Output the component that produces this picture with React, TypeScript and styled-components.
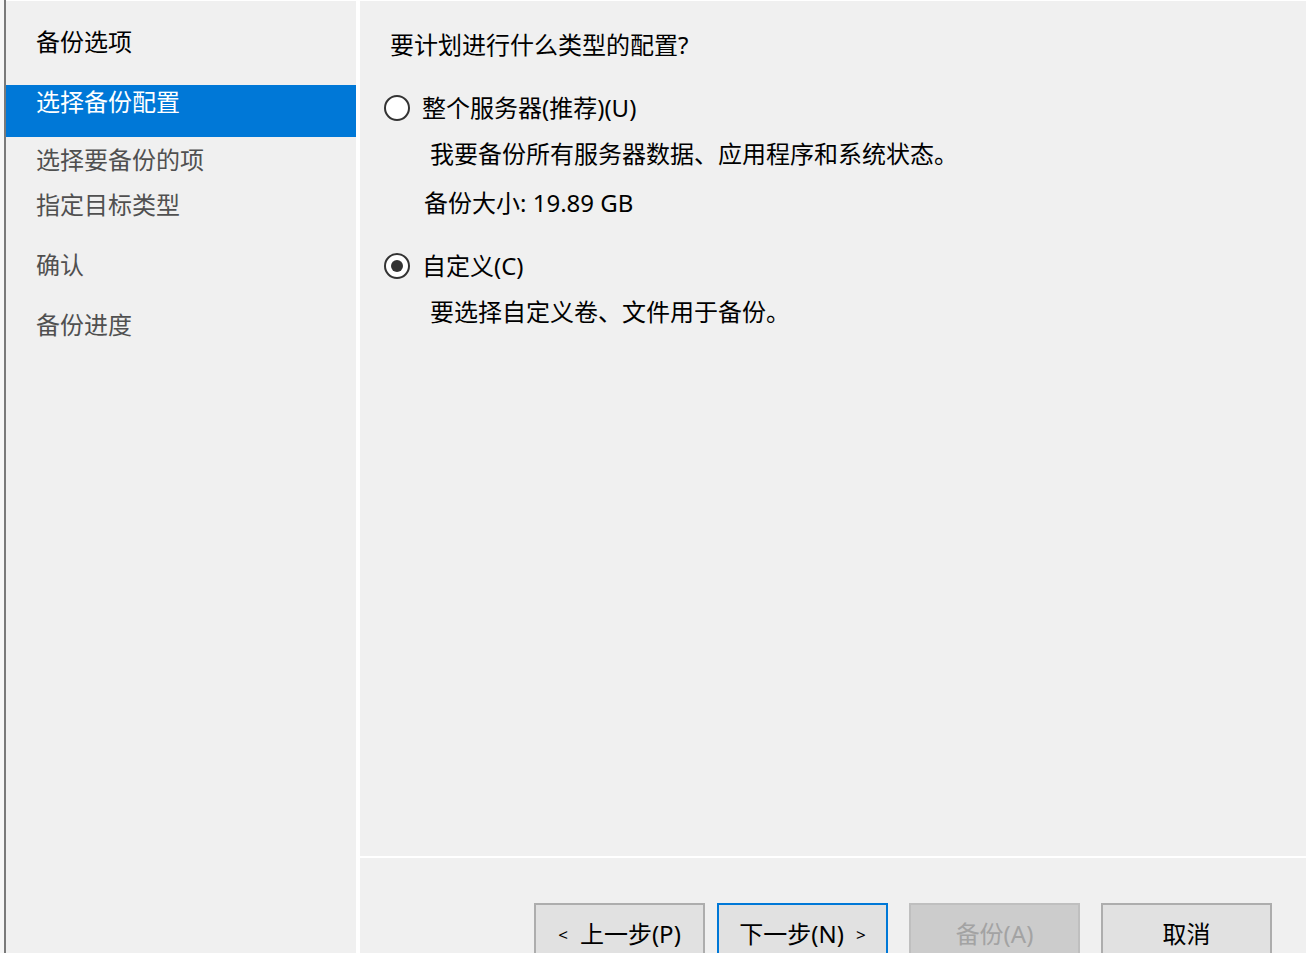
import React from 'react'
import styled, {createGlobalStyle} from 'styled-components'

const GlobalStyle = createGlobalStyle`
  html, body {
    margin: 0;
    padding: 0;
    width: 1306px;
    height: 953px;
    overflow: hidden;
    background: #ffffff;
  }
  body {
    font-family: "Noto Sans", "Noto Sans CJK SC", sans-serif;
    font-size: 24px;
  }
`

const Window = styled.div`
  display: flex;
  height: 953px;
  background: #ffffff;
  padding-top: 1px;
  box-sizing: border-box;
`

const Edge = styled.div`
  width: 4px;
  flex-shrink: 0;
  background: #f7f7f7;
  border-right: 2px solid #7a7a7a;
  margin-top: -1px;
`

const Nav = styled.nav`
  width: 350px;
  flex-shrink: 0;
  background: #f0f0f0;
  margin-right: 4px;
`

const NavItem = styled.div<{$h: number; $pt: number; $tone: 'head' | 'active' | 'idle'}>`
  height: ${({$h}) => $h}px;
  padding: ${({$pt}) => $pt}px 0 0 30px;
  box-sizing: border-box;
  line-height: 30px;
  white-space: nowrap;
  background: ${({$tone}) => ($tone === 'active' ? '#0078d7' : 'transparent')};
  color: ${({$tone}) =>
    $tone === 'active' ? '#ffffff' : $tone === 'head' ? '#000000' : '#505050'};
`

const Main = styled.main`
  flex: 1;
  display: flex;
  flex-direction: column;
  background: #f0f0f0;
`

const Content = styled.section`
  flex: 1;
  padding-top: 29px;
  color: #000000;
  line-height: 30px;
  white-space: nowrap;
`

const Line = styled.div<{$mt: number; $pl: number}>`
  margin-top: ${({$mt}) => $mt}px;
  padding-left: ${({$pl}) => $pl}px;
`

const RadioRow = styled.label<{$mt: number}>`
  display: flex;
  align-items: center;
  gap: 12px;
  margin-top: ${({$mt}) => $mt}px;
  padding-left: 24px;
`

const RadioCircle = styled.span<{$checked?: boolean}>`
  width: 26px;
  height: 26px;
  box-sizing: border-box;
  border: 2px solid #333333;
  border-radius: 50%;
  background: #ffffff;
  display: flex;
  align-items: center;
  justify-content: center;

  &::after {
    content: '';
    width: 12px;
    height: 12px;
    border-radius: 50%;
    background: ${({$checked}) => ($checked ? '#333333' : 'transparent')};
  }
`

const Footer = styled.footer`
  height: 97px;
  flex-shrink: 0;
  border-top: 2px solid #ffffff;
  display: flex;
  justify-content: flex-end;
  align-items: flex-start;
  padding: 45px 34px 0 0;
  box-sizing: border-box;
  overflow: hidden;
`

const Button = styled.button<{$kind?: 'default' | 'disabled'; $ml: number}>`
  width: 171px;
  height: 56px;
  flex-shrink: 0;
  margin-left: ${({$ml}) => $ml}px;
  padding: 14px 0 0;
  box-sizing: border-box;
  font: inherit;
  line-height: 30px;
  display: flex;
  justify-content: center;
  align-items: flex-start;
  gap: 12px;
  border: 2px solid
    ${({$kind}) =>
      $kind === 'default' ? '#0078d7' : $kind === 'disabled' ? '#bfbfbf' : '#adadad'};
  background: ${({$kind}) => ($kind === 'disabled' ? '#cccccc' : '#e1e1e1')};
  color: ${({$kind}) => ($kind === 'disabled' ? '#a3a3a3' : '#000000')};
`

const Chevron = styled.span`
  font-size: 17px;
  line-height: 32px;
`

const navItems: {label: string; h: number; pt: number; tone: 'head' | 'active' | 'idle'}[] = [
  {label: '备份选项', h: 84, pt: 26, tone: 'head'},
  {label: '选择备份配置', h: 52, pt: 2, tone: 'active'},
  {label: '选择要备份的项', h: 45, pt: 8, tone: 'idle'},
  {label: '指定目标类型', h: 60, pt: 8, tone: 'idle'},
  {label: '确认', h: 60, pt: 8, tone: 'idle'},
  {label: '备份进度', h: 60, pt: 8, tone: 'idle'},
]

const App = () => (
  <>
    <GlobalStyle />
    <Window>
      <Edge />
      <Nav>
        {navItems.map((item) => (
          <NavItem key={item.label} $h={item.h} $pt={item.pt} $tone={item.tone}>
            {item.label}
          </NavItem>
        ))}
      </Nav>
      <Main>
        <Content>
          <Line $mt={0} $pl={30}>要计划进行什么类型的配置?</Line>
          <RadioRow $mt={33}>
            <RadioCircle />
            <span>整个服务器(推荐)(U)</span>
          </RadioRow>
          <Line $mt={16} $pl={70}>我要备份所有服务器数据、应用程序和系统状态。</Line>
          <Line $mt={19} $pl={64}>备份大小: 19.89 GB</Line>
          <RadioRow $mt={33}>
            <RadioCircle $checked />
            <span>自定义(C)</span>
          </RadioRow>
          <Line $mt={16} $pl={70}>要选择自定义卷、文件用于备份。</Line>
        </Content>
        <Footer>
          <Button $ml={0}>
            <Chevron>&lt;</Chevron>
            <span>上一步(P)</span>
          </Button>
          <Button $kind="default" $ml={12}>
            <span>下一步(N)</span>
            <Chevron>&gt;</Chevron>
          </Button>
          <Button $kind="disabled" $ml={21} disabled>
            <span>备份(A)</span>
          </Button>
          <Button $ml={21}>
            <span>取消</span>
          </Button>
        </Footer>
      </Main>
    </Window>
  </>
)

export default App
